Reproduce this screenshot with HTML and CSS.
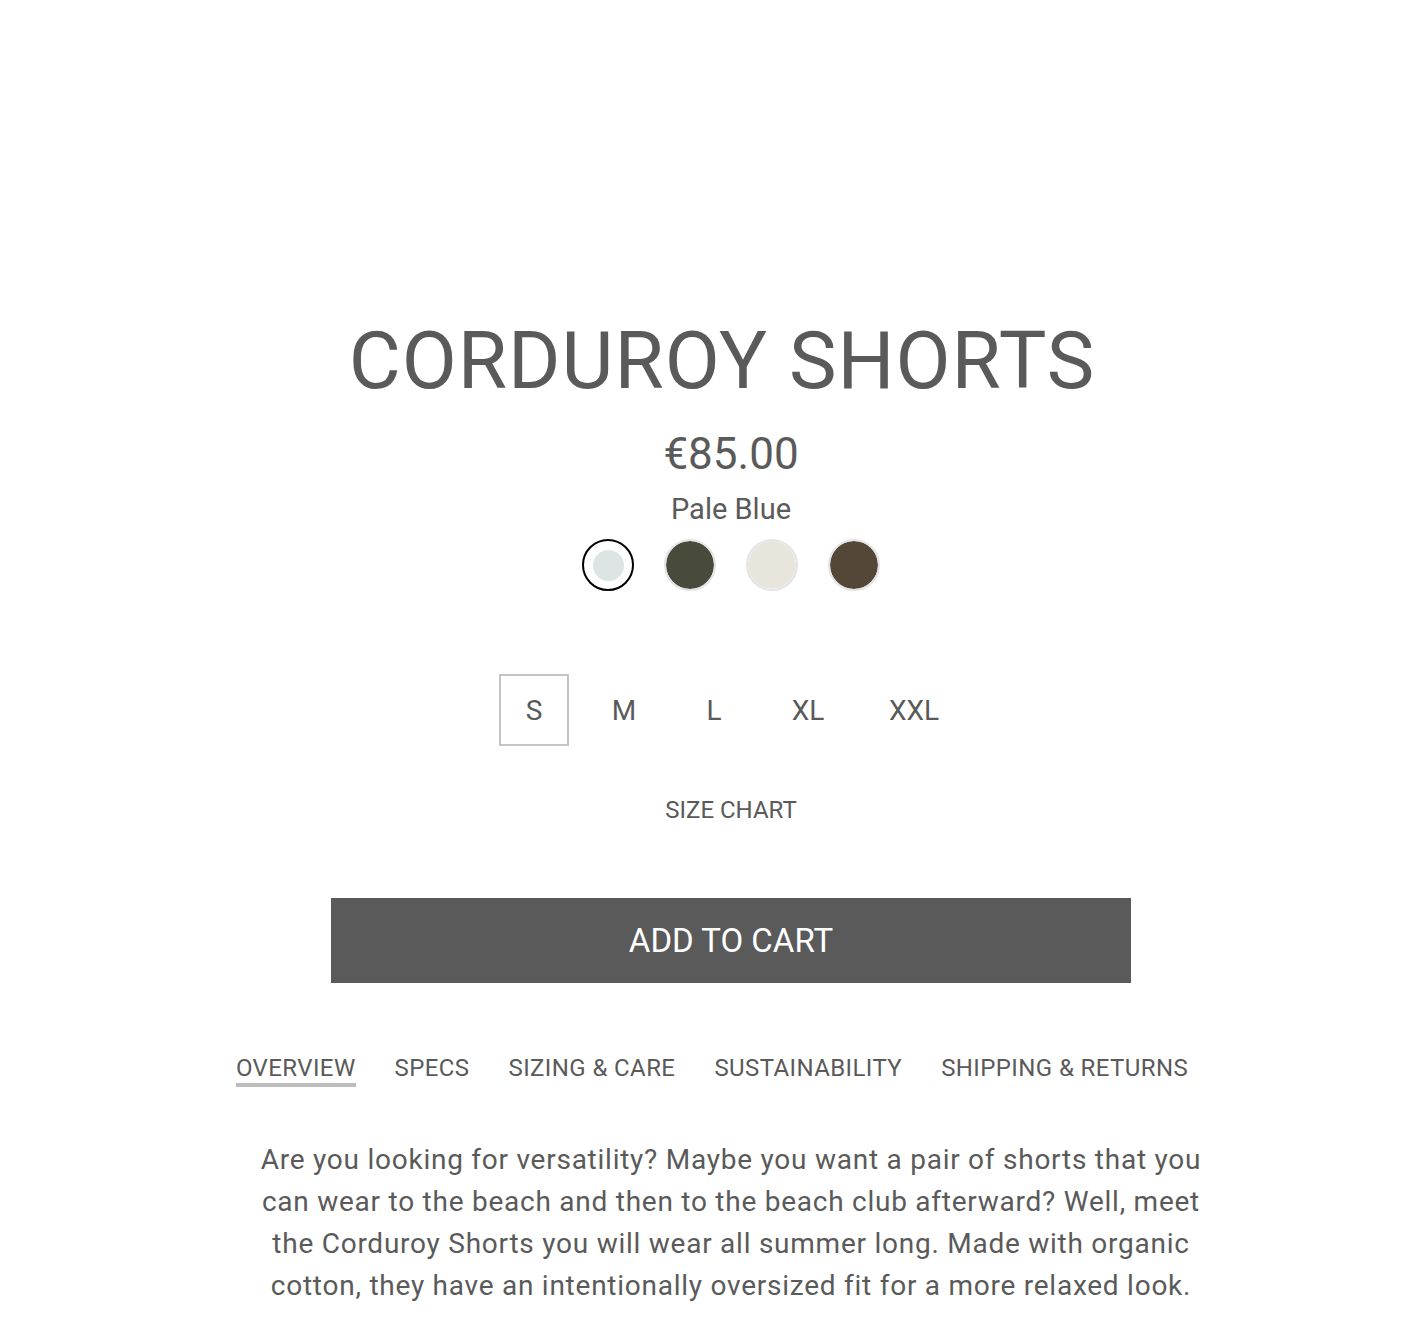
FILE: index.html
```html
<!DOCTYPE html>
<html lang="en">
<head>
<meta charset="utf-8">
<title>Corduroy Shorts</title>
<link rel="stylesheet" href="styles.css">
</head>
<body>
<main class="product">
  <section class="info">
    <h1 class="title">CORDUROY SHORTS</h1>
    <div class="price">€85.00</div>
    <div class="color-name">Pale Blue</div>
    <div class="swatches">
      <button class="swatch selected"><span class="dot pale"></span></button>
      <button class="swatch"><span class="dot olive"></span></button>
      <button class="swatch"><span class="dot cream"></span></button>
      <button class="swatch"><span class="dot brown"></span></button>
    </div>
    <div class="sizes">
      <button class="size active">S</button>
      <button class="size">M</button>
      <button class="size">L</button>
      <button class="size size-xl">XL</button>
      <button class="size size-xxl">XXL</button>
    </div>
    <a class="size-chart" href="#">SIZE CHART</a>
    <button class="add-to-cart">ADD TO CART</button>
  </section>
  <nav class="tabs">
    <a class="tab active" href="#">OVERVIEW</a>
    <a class="tab" href="#">SPECS</a>
    <a class="tab" href="#">SIZING &amp; CARE</a>
    <a class="tab" href="#">SUSTAINABILITY</a>
    <a class="tab" href="#">SHIPPING &amp; RETURNS</a>
  </nav>
  <p class="description">Are you looking for versatility? Maybe you want a pair of shorts that you can wear to the beach and then to the beach club afterward? Well, meet the Corduroy Shorts you will wear all summer long. Made with organic cotton, they have an intentionally oversized fit for a more relaxed look.</p>
</main>
</body>
</html>
```

FILE: styles.css
```css
* { box-sizing: border-box; }
html, body {
  margin: 0;
  padding: 0;
  background: #ffffff;
}
body {
  font-family: Roboto, "Liberation Sans", Arial, sans-serif;
  color: #5a5a5a;
  width: 1424px;
}
.product {
  display: flex;
  flex-direction: column;
  align-items: center;
}
.info {
  display: flex;
  flex-direction: column;
  align-items: center;
  width: 100%;
  padding-left: 38px;
}
.title {
  margin: 313px 0 0;
  padding-right: 18px;
  font-size: 80px;
  line-height: 96px;
  font-weight: 400;
  letter-spacing: 1px;
}
.price {
  margin-top: 20px;
  font-size: 44px;
  line-height: 50px;
}
.color-name {
  margin-top: 13px;
  font-size: 29px;
  line-height: 34px;
}
.swatches {
  margin-top: 13px;
  display: flex;
  gap: 30px;
}
.swatch {
  width: 52px;
  height: 52px;
  border-radius: 50%;
  padding: 0;
  border: 2px solid #e4e4e4;
  background: #fff;
  display: flex;
  align-items: center;
  justify-content: center;
  cursor: pointer;
  overflow: hidden;
}
.swatch .dot {
  width: 100%;
  height: 100%;
  border-radius: 50%;
  display: block;
}
.swatch.selected {
  border: 2px solid #000;
}
.swatch.selected .dot {
  width: 31px;
  height: 31px;
}
.dot.pale { background: #dde5e4; }
.dot.olive { background: #484a3b; }
.dot.cream { background: #e8e6dc; }
.dot.brown { background: #554738; }

.sizes {
  margin-top: 83px;
  margin-right: 2px;
  display: flex;
  gap: 20px;
}
.size {
  height: 72px;
  width: 70px;
  padding: 0;
  border: 2px solid transparent;
  background: #fff;
  font-family: inherit;
  font-size: 28px;
  color: #5a5a5a;
  cursor: pointer;
}
.size.size-xl { width: 78px; }
.size.size-xxl { width: 94px; }
.size.active {
  border-color: #c4c4c4;
}
.size-chart {
  margin-top: 50px;
  font-size: 24px;
  line-height: 28px;
  color: #5a5a5a;
  text-decoration: none;
}
.add-to-cart {
  margin-top: 74px;
  width: 800px;
  height: 85px;
  border: 0;
  background: #5a5a5a;
  color: #ffffff;
  font-family: inherit;
  font-size: 33px;
  cursor: pointer;
}
.tabs {
  margin-top: 71px;
  display: flex;
  gap: 39px;
}
.tab {
  font-size: 24px;
  line-height: 28px;
  letter-spacing: 0.4px;
  color: #5a5a5a;
  text-decoration: none;
  padding-bottom: 1px;
  border-bottom: 4px solid transparent;
}
.tab.active {
  border-bottom-color: #bdbdbd;
}
.description {
  margin: 52px 0 0 38px;
  width: 960px;
  font-size: 28px;
  line-height: 42px;
  letter-spacing: 0.75px;
  text-align: center;
  color: #5a5a5a;
}
```
